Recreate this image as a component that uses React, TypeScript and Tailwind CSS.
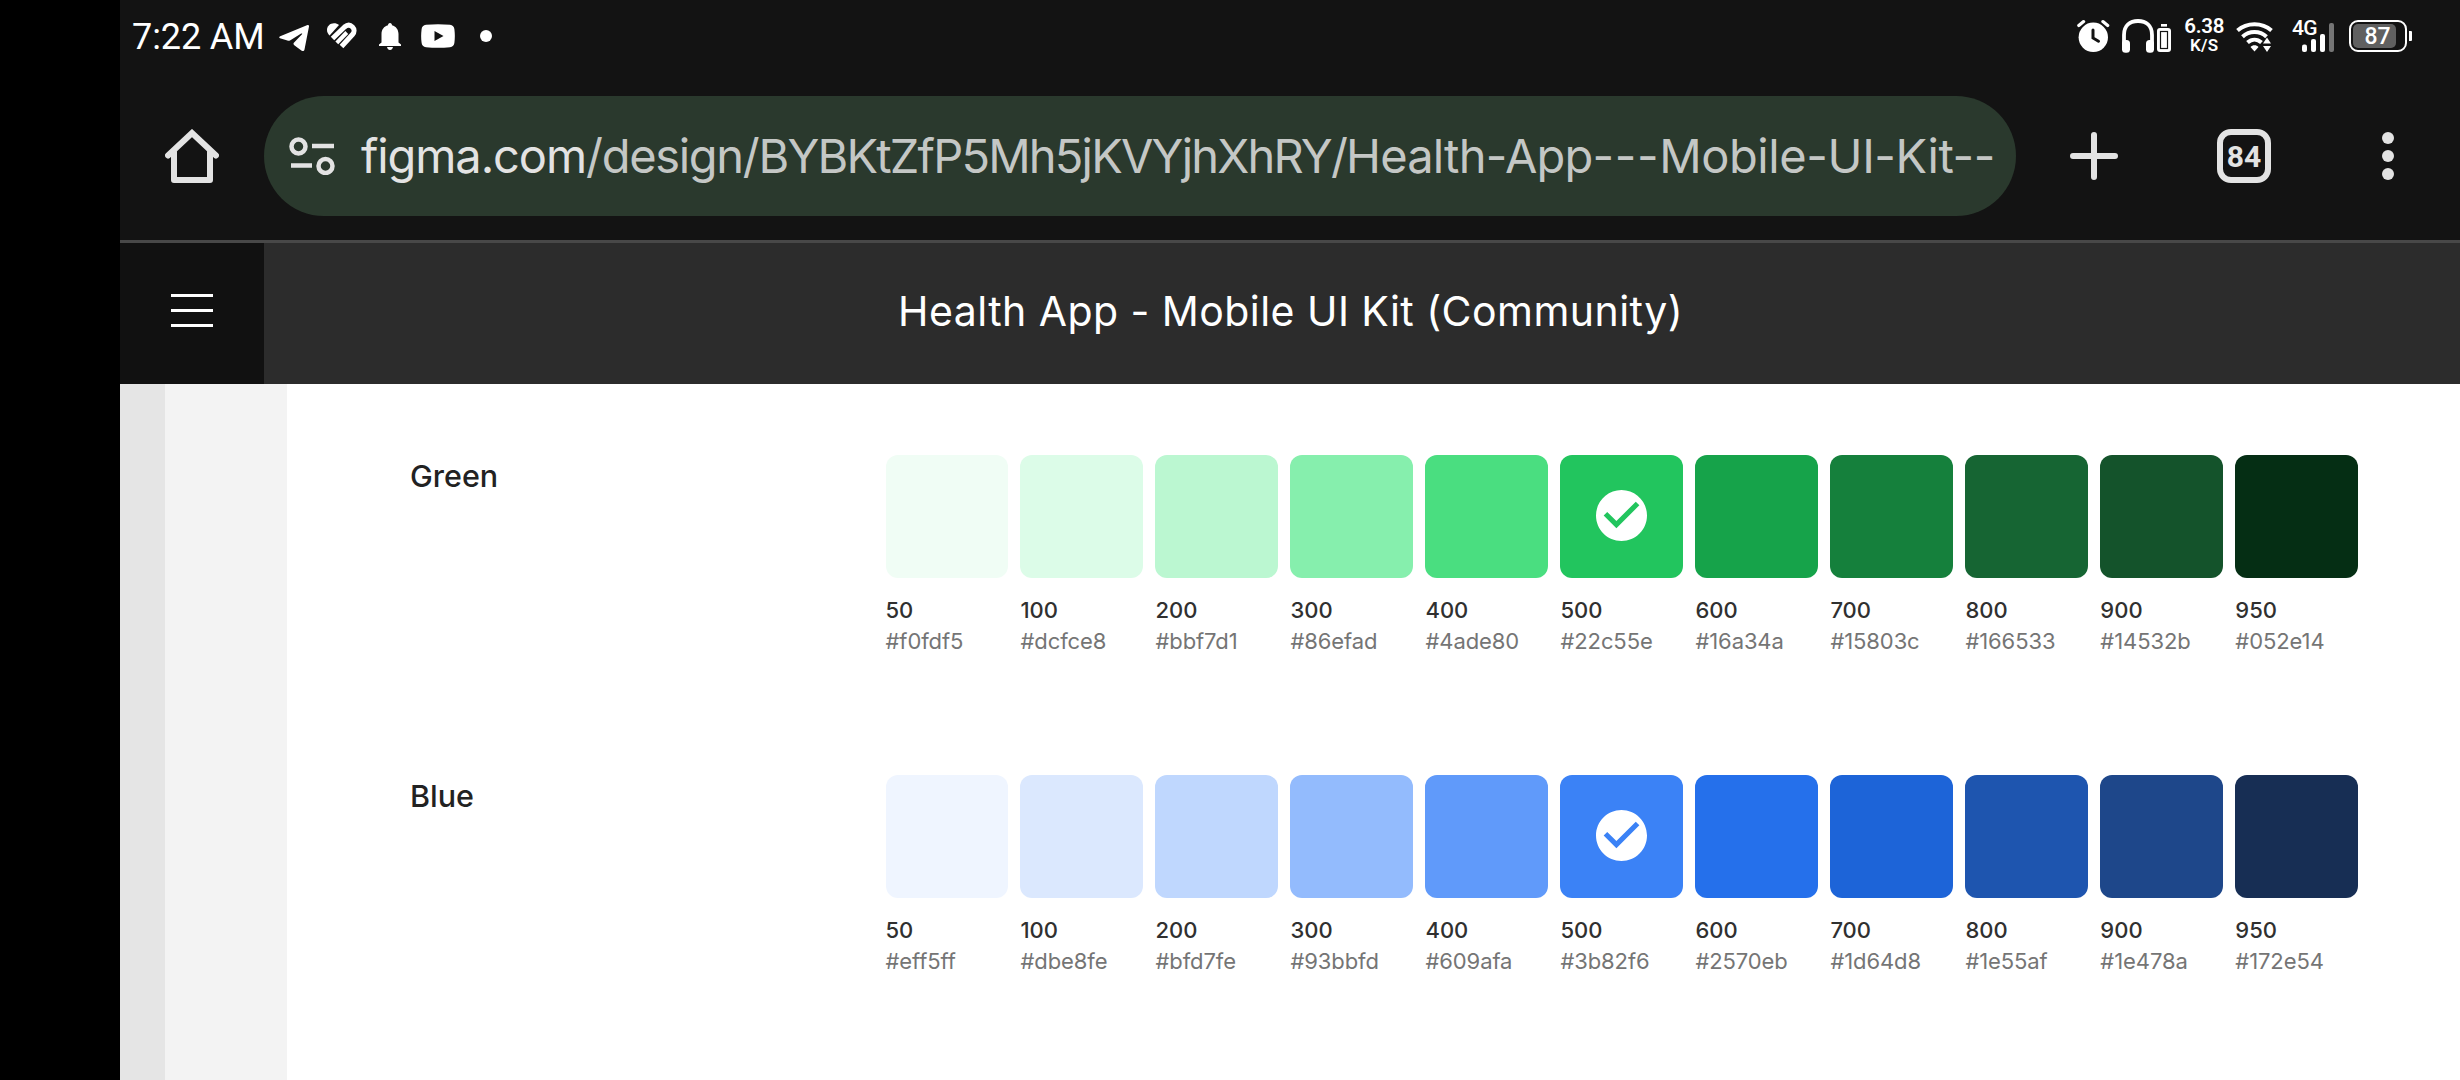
import React from "react";

const green = [
  ["50", "#f0fdf5"], ["100", "#dcfce8"], ["200", "#bbf7d1"], ["300", "#86efad"], ["400", "#4ade80"], ["500", "#22c55e"],
  ["600", "#16a34a"], ["700", "#15803c"], ["800", "#166533"], ["900", "#14532b"], ["950", "#052e14"],
];
const blue = [
  ["50", "#eff5ff"], ["100", "#dbe8fe"], ["200", "#bfd7fe"], ["300", "#93bbfd"], ["400", "#609afa"], ["500", "#3b82f6"],
  ["600", "#2570eb"], ["700", "#1d64d8"], ["800", "#1e55af"], ["900", "#1e478a"], ["950", "#172e54"],
];

function CheckIcon() {
  return (
    <svg viewBox="2 2 20 20" className="-mt-[2px] size-[51px]" fill="#fff">
      <path d="M12 2C6.48 2 2 6.48 2 12s4.48 10 10 10 10-4.48 10-10S17.52 2 12 2zm-2 15l-5-5 1.41-1.41L10 14.17l7.59-7.59L19 8l-9 9z" />
    </svg>
  );
}

function PaletteRow({ name, shades }: { name: string; shades: string[][] }) {
  return (
    <section className="flex h-[320.5px]">
      <h2 className="w-[475.5px] pt-[2px] text-[30.5px] leading-[38px] font-medium text-[#222]">{name}</h2>
      <div className="flex gap-[12.4px]">
        {shades.map(([step, hex]) => (
          <div key={step} className="w-[122.6px] whitespace-nowrap">
            <div className="flex h-[123px] items-center justify-center rounded-[12px]" style={{ backgroundColor: hex }}>
              {step === "500" && <CheckIcon />}
            </div>
            <div className="mt-[17px] text-[22px] leading-[31px] font-medium text-[#303030]">{step}</div>
            <div className="text-[22px] leading-[31px] tracking-[-0.1px] text-[#757575]">{hex}</div>
          </div>
        ))}
      </div>
    </section>
  );
}

function StatusBar() {
  return (
    <div className="flex h-[72px] justify-between pr-[48px] pl-[12px] font-[Roboto,sans-serif] text-white">
      <div className="flex items-center">
        <span className="w-[134px] pt-[2px] text-[36px] leading-[72px] tracking-[-0.1px] whitespace-nowrap">7:22 AM</span>
        <svg className="mt-[3px] ml-[13px] h-[28px] w-[30px]" viewBox="0 0 30 28" fill="#fff">
          <path d="M1.2 12.2 28.5 1c1-.3 1.7.3 1.5 1.400L25.500 25.500c-.4 1.600-1.500 2-2.800 1.200l-7.400-5.500c-1-.8-1.100-1.700-.2-2.600L23 10.200c.5-.6 0-1.100-.8-.6L11 16.400c-.9.5-1.700.5-2.600.2L1 14.200c-1.200-.5-1-1.400.2-2z" />
        </svg>
        <svg className="ml-[17px] h-[28px] w-[32px]" viewBox="0 0 32 28" fill="none" stroke="#fff">
          <path d="M3.600 13.600C1.800 11.800 1 10 1 8 1 4 4 1.200 8 1.200c2 0 3.600.6 5 1.800z" fill="#fff" stroke="none" />
          <path d="M6.500 16.500 18.500 5c3-2.500 6-2 8 0s2.200 5 0 7.500L15.500 24.500" strokeWidth="5" />
          <path d="m10.800 20.800 10-10.300" strokeWidth="4" />
        </svg>
        <svg className="mt-[2px] ml-[21px] h-[28px] w-[22px]" viewBox="0 0 22 28" fill="#fff">
          <path d="M11 0c1.300 0 2 1 2 2.300C17 3.400 19.500 6.700 19.500 11v8.500L22 21.500V23H0v-1.500l2.500-2V11C2.500 6.700 5 3.400 9 2.300 9 1 9.700 0 11 0zM8 24h6c-.4 1.800-1.500 3-3 3s-2.600-1.200-3-3z" />
        </svg>
        <svg className="ml-[20px] h-[24px] w-[34px]" viewBox="0 0 34 24" fill="#fff">
          <path fillRule="evenodd" d="M5 .8C13 0 21 0 29 .8c2.600.2 4.200 2 4.400 4.400.6 4.500.6 9 0 13.600-.2 2.400-1.800 4.200-4.400 4.400-8 .8-16 .8-24 0C2.400 23 .8 21.200.6 18.800c-.6-4.500-.6-9 0-13.600C.8 2.800 2.400 1 5 .8zM13.500 7v10l9-5z" />
        </svg>
        <span className="ml-[25px] size-[12px] rounded-full bg-white" />
      </div>
      <div className="flex items-start pt-[18px]">
        <svg className="-ml-px mr-px h-[35px] w-[33px]" viewBox="0 0 33 35" fill="#fff">
          <circle cx="16.300" cy="19.300" r="14.700" />
          <path d="m1.800 7.600 4.800-4M30.700 7.600l-4.800-4" stroke="#fff" strokeWidth="3.200" strokeLinecap="round" />
          <path d="M16 12v8l5.500 3.200" fill="none" stroke="#131313" strokeWidth="3" strokeLinecap="round" />
        </svg>
        <svg className="ml-[11px] h-[35px] w-[49px]" viewBox="0 0 49 35" fill="none" stroke="#fff">
          <path d="M2 27V17C2 7.500 8 3 16 3s14 4.500 14 14v10" strokeWidth="3.800" />
          <rect x="0" y="22" width="8" height="12.800" rx="3.500" fill="#fff" stroke="none" />
          <rect x="24" y="22" width="8" height="12.800" rx="3.500" fill="#fff" stroke="none" />
          <rect x="35" y="10" width="14" height="24" rx="3" fill="#fff" stroke="none" />
          <rect x="39" y="6" width="6" height="2.600" fill="#fff" stroke="none" />
          <rect x="38.500" y="13.500" width="7" height="17" stroke="#131313" strokeWidth="1.200" />
        </svg>
        <div className="-mt-[1px] ml-[13px] flex w-[41px] flex-col items-center leading-none font-semibold">
          <span className="text-[20.5px] leading-[18px] tracking-[-0.3px]">6.38</span>
          <span className="mt-[2px] text-[17px] leading-[16px] tracking-[0.2px]">K/S</span>
        </div>
        <svg className="ml-[11px] h-[35px] w-[38px]" viewBox="0 0 38 35" fill="none" stroke="#fff" strokeWidth="4">
          <path d="M1.500 12.500C11 4.200 26 4.200 35.500 12.500" />
          <path d="M6.500 18.700c6.800-6.200 17.200-6.200 24 0" />
          <path d="M11.500 24.500c4.200-3.800 9.800-3.800 14 0" />
          <path d="m14.500 29 4 4.500 4-4.500c-2-2.200-6-2.200-8 0z" fill="#fff" stroke="none" />
          <path d="m27 25.500 4-6 4 6zM27 28l4 6 4-6z" fill="#fff" stroke="none" />
        </svg>
        <div className="relative ml-[18.3px] h-[34px] w-[44px]">
          <span className="absolute top-[1px] left-0 text-[21px] leading-[19px] font-medium tracking-[-0.6px]">4G</span>
          <svg className="absolute inset-0" width="44" height="34" fill="#fff">
            <rect x="10" y="26.500" width="5" height="7.500" rx="2" />
            <rect x="19" y="21" width="5" height="13" rx="2" />
            <rect x="28" y="16" width="5" height="18" rx="2" />
            <rect x="37" y="5" width="5" height="29" rx="2" fill="#757575" />
          </svg>
        </div>
        <div className="mt-[2px] ml-[13px] flex items-center">
          <div className="relative flex h-[32px] w-[58px] items-center justify-center rounded-[9px] border-2 border-white">
            <div className="absolute top-[2px] left-[2px] h-[24px] w-[43px] rounded-[5px] bg-[#606060]" />
            <span className="relative pt-[1px] pr-[1px] text-[23px] leading-[28px] font-medium">87</span>
          </div>
          <div className="ml-[2px] h-[10px] w-[3px] rounded-r-[1px] bg-white" />
        </div>
      </div>
    </div>
  );
}

function BrowserBar() {
  return (
    <div className="flex h-[168px] items-start pt-[24px]">
      <div className="flex h-[120px] w-[144px] items-center justify-center">
        <svg width="54" height="54" viewBox="0 0 54 54" fill="none" stroke="#e3e3e3" strokeWidth="6" strokeLinecap="round" strokeLinejoin="round">
          <path d="M3 26.500 27 4l24 22.500" strokeLinejoin="miter" />
          <path d="M9 23v28h36V23" />
        </svg>
      </div>
      <div className="flex h-[120px] w-[1752px] items-center rounded-full bg-[#2a392d]">
        <svg className="ml-[25px] shrink-0" width="46" height="38" viewBox="0 0 46 38" fill="none" stroke="#e3e3e3">
          <circle cx="9.500" cy="9.500" r="7" strokeWidth="4.500" />
          <circle cx="36.500" cy="29" r="7" strokeWidth="4.500" />
          <path d="M23 9h22M2 28.500h21" strokeWidth="4.500" />
        </svg>
        <div className="ml-[26px] w-[1640px] text-[47px] leading-[60px] whitespace-nowrap text-[#c4c7c5]">
          <span className="tracking-[-1.1px] text-[#e3e3e3]">figma.com</span>
          <span className="tracking-[-1.3px]">/design/</span>
          <span className="tracking-[-1.8px]">BYBKtZfP5Mh5jKVYjhXhRY/</span>
          <span className="tracking-[-0.8px]">Health-App</span>
          <span className="tracking-[0.6px]">---</span>
          <span className="tracking-[-0.4px]">Mobile-UI-Kit--</span>
        </div>
      </div>
      <div className="flex h-[120px] flex-1 items-center">
        <svg className="ml-[54px]" width="48" height="48" viewBox="0 0 48 48" stroke="#e3e3e3" strokeWidth="6" strokeLinecap="round">
          <path d="M24 3v42M3 24h42" />
        </svg>
        <div className="ml-[99px] flex size-[54px] items-center justify-center rounded-[14px] border-6 border-[#e3e3e3] pt-px font-[Roboto,sans-serif] text-[30px] leading-none font-bold text-[#e3e3e3]">
          84
        </div>
        <div className="ml-[111px] flex flex-col gap-[6px]">
          <i className="size-[12px] rounded-full bg-[#e3e3e3]" />
          <i className="size-[12px] rounded-full bg-[#e3e3e3]" />
          <i className="size-[12px] rounded-full bg-[#e3e3e3]" />
        </div>
      </div>
    </div>
  );
}

export default function App() {
  return (
    <div className="flex h-[1080px] w-[2460px] overflow-hidden bg-black pl-[120px] font-[Inter,sans-serif]">
      <div className="flex flex-1 flex-col bg-[#131313]">
        <StatusBar />
        <BrowserBar />
        <header className="flex h-[144px] border-t-3 border-[#484848] bg-[#2c2c2c]">
          <button className="flex w-[144px] flex-col items-center justify-center gap-[12px] bg-[#111] pb-[6px]">
            <i className="h-[3px] w-[42px] bg-white" />
            <i className="h-[3px] w-[42px] bg-white" />
            <i className="h-[3px] w-[42px] bg-white" />
          </button>
          <h1 className="ml-[634px] text-[41px] leading-[136px] tracking-[0.45px] whitespace-nowrap text-white">Health App - Mobile UI Kit (Community)</h1>
        </header>
        <main className="flex flex-1 overflow-hidden bg-white">
          <div className="w-[45px] bg-[#e5e5e5]" />
          <div className="w-[122px] bg-[#f3f3f3]" />
          <div className="pt-[70.5px] pl-[123px]">
            <PaletteRow name="Green" shades={green} />
            <PaletteRow name="Blue" shades={blue} />
          </div>
        </main>
      </div>
    </div>
  );
}
